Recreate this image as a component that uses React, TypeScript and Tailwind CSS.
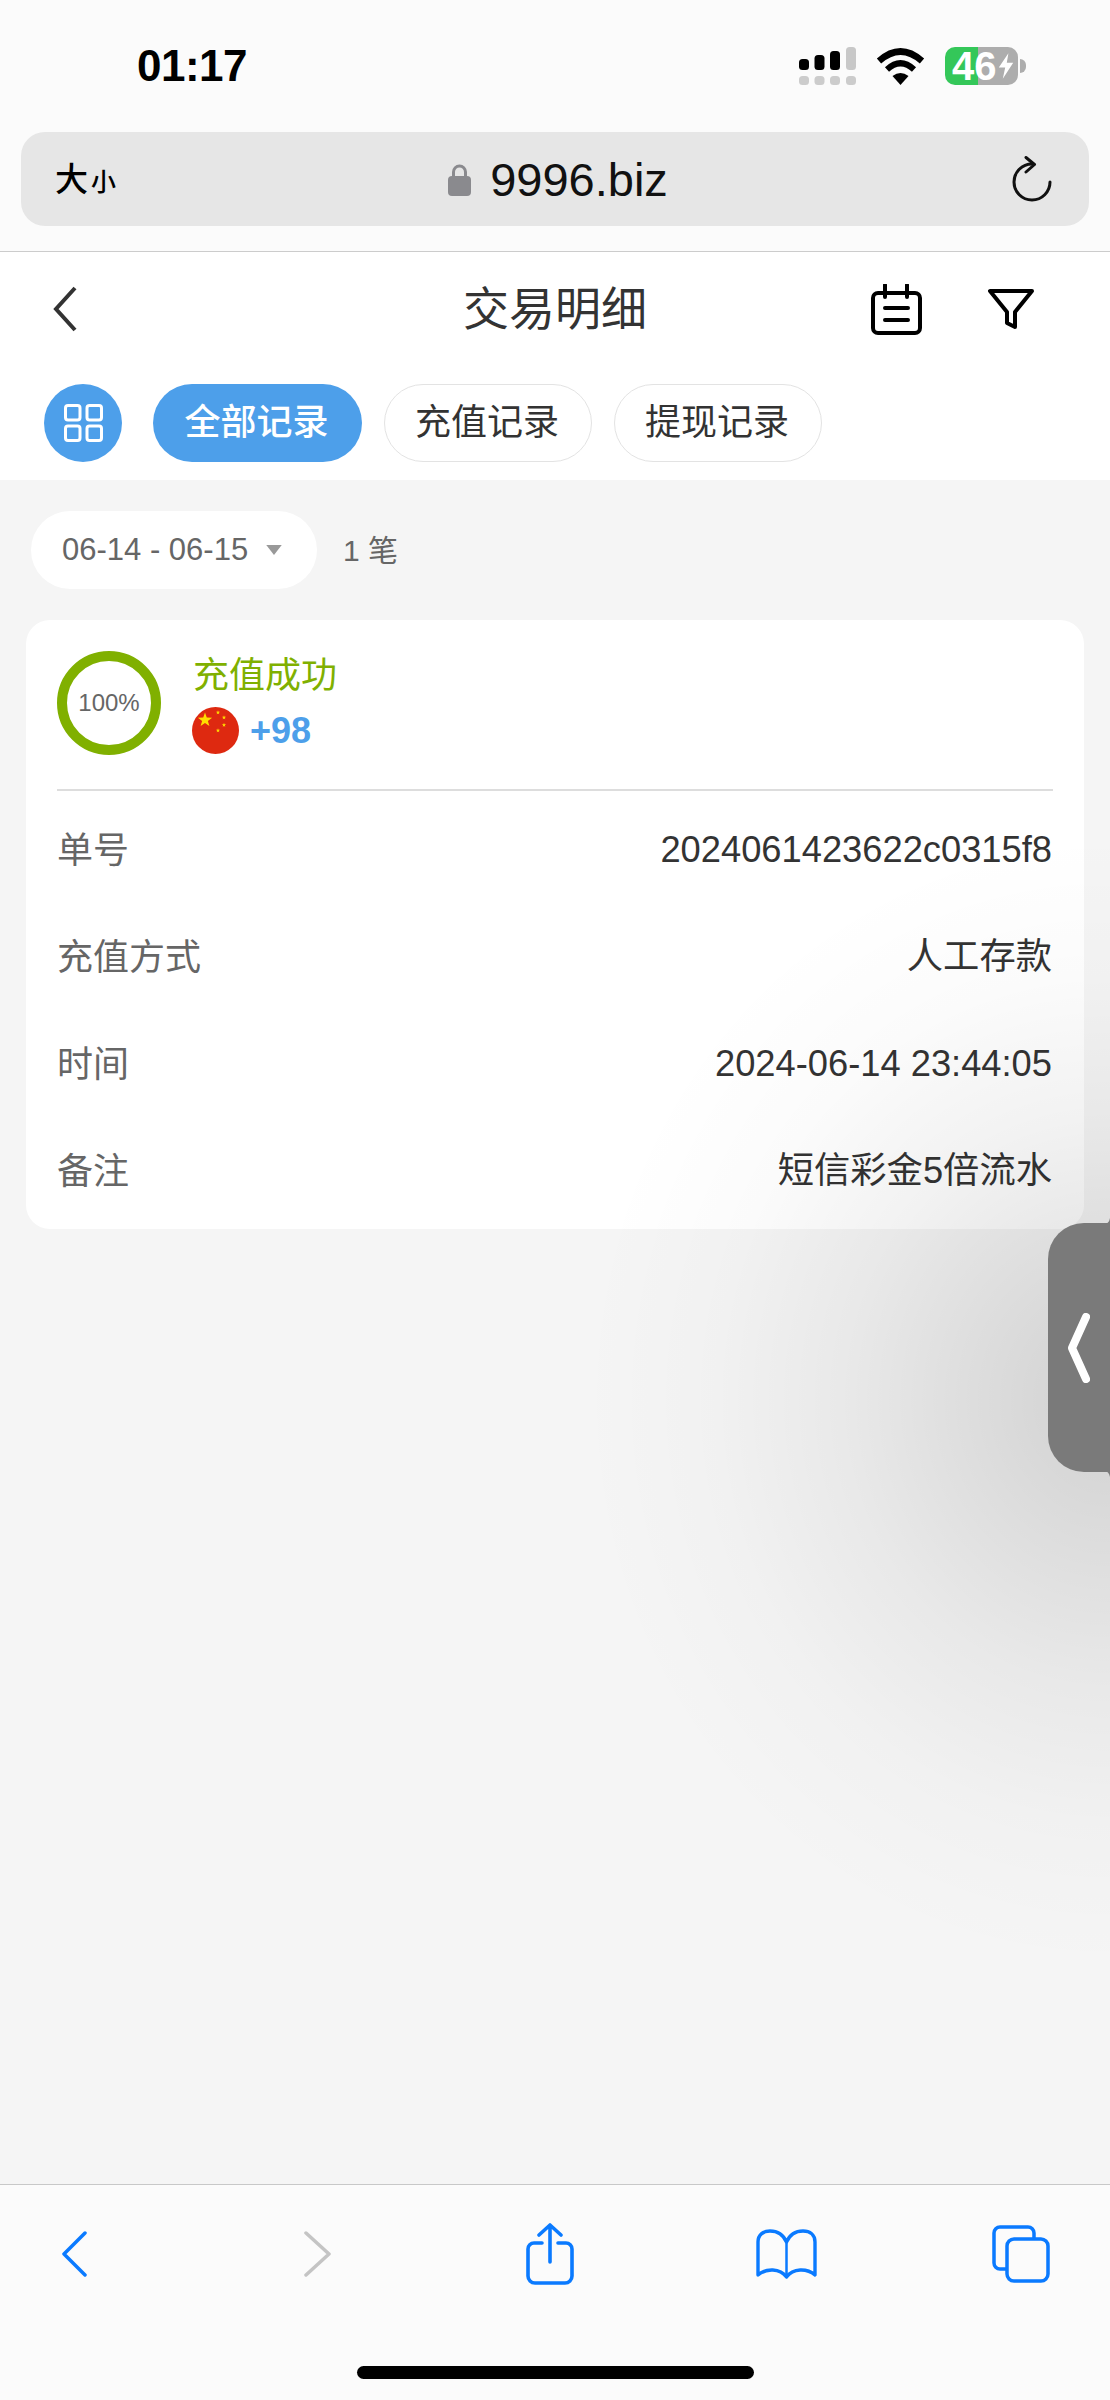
import { Fragment } from 'react';

const rows = [
  { label: '单号', value: '2024061423622c0315f8' },
  { label: '充值方式', value: '人工存款' },
  { label: '时间', value: '2024-06-14 23:44:05' },
  { label: '备注', value: '短信彩金5倍流水' },
];

function starPoints(cx: number, cy: number, r: number) {
  const pts: string[] = [];
  for (let i = 0; i < 10; i++) {
    const rad = i % 2 === 0 ? r : r * 0.4;
    const a = -Math.PI / 2 + (i * Math.PI) / 5;
    pts.push(`${cx + rad * Math.cos(a)},${cy + rad * Math.sin(a)}`);
  }
  return pts.join(' ');
}

function StatusIcons() {
  return (
    <div className="flex items-center">
      <svg width="57" height="38" viewBox="0 0 57 38">
        <rect x="0" y="12" width="10" height="11" rx="3.5" fill="#000" />
        <rect x="15.5" y="8" width="10" height="15" rx="3.5" fill="#000" />
        <rect x="31" y="4" width="10" height="19" rx="3.5" fill="#000" />
        <rect x="47" y="0" width="10" height="23" rx="3.5" fill="#c8c8c8" />
        {[0, 15.5, 31, 47].map((x) => (
          <rect key={x} x={x} y="29" width="10" height="9" rx="3.5" fill="#cccccc" />
        ))}
      </svg>
      <svg className="ml-[20px]" width="49" height="37" viewBox="0 0 49 37">
        <path d="M3 13 Q24.5 -6 46 13" fill="none" stroke="#000" strokeWidth="6.5" />
        <path d="M11 21.5 Q24.5 9 38 21.5" fill="none" stroke="#000" strokeWidth="6" />
        <path d="M16.5 28 Q24.5 22 32.5 28 L24.5 37 Z" fill="#000" />
      </svg>
      <div className="ml-[20px] w-[73px] h-[38px] rounded-[10px] flex items-center pl-[7px] bg-[linear-gradient(90deg,#34c759_45%,#adadad_45%)] text-white text-[40px] leading-[38px] font-bold">
        <span>46</span>
        <svg className="ml-[1px]" width="16" height="30" viewBox="0 0 20 32">
          <path d="M13 0 L1 18 H9 L6 32 L19 12 H11 Z" fill="#fff" />
        </svg>
      </div>
      <div className="ml-[2px] w-[6px] h-[14px] rounded-r-full bg-[#adadad]" />
    </div>
  );
}

function UrlBar() {
  return (
    <div className="mx-[21px] h-[94px] rounded-[24px] bg-[#e6e6e6] grid grid-cols-[1fr_auto_1fr] items-center pl-[34px] pr-[37px]">
      <div className="flex items-baseline font-medium text-black">
        <span className="text-[33px] leading-none">大</span>
        <span className="text-[25px] leading-none ml-[3px]">小</span>
      </div>
      <div className="ml-[9px] flex items-center text-[47px] leading-none text-[#111]">
        <svg width="23" height="33" viewBox="0 0 23 33">
          <path d="M5.5 14 V9 a6 6 0 0 1 12 0 V14" fill="none" stroke="#8a8a8e" strokeWidth="3" />
          <rect x="0" y="13" width="23" height="20" rx="4" fill="#8a8a8e" />
        </svg>
        <span className="ml-[19px]">9996.biz</span>
      </div>
      <div className="flex justify-end">
        <svg width="40" height="46" viewBox="0 0 40 46" fill="none" stroke="#111" strokeWidth="3" strokeLinecap="round" strokeLinejoin="round">
          <path d="M38 26 A18 18 0 1 1 20 8" />
          <path d="M14 1.5 L22.5 8.5 L14 16" />
        </svg>
      </div>
    </div>
  );
}

function PageNav() {
  return (
    <div className="bg-white">
      <div className="h-[114px] grid grid-cols-[1fr_auto_1fr] items-center px-[53px]">
        <svg width="24" height="46" viewBox="0 0 24 46" fill="none" stroke="#333" strokeWidth="4">
          <path d="M22 2 L3 23 L22 44" />
        </svg>
        <div className="text-[46px] leading-none text-[#333]">交易明细</div>
        <div className="flex items-center justify-end mr-[23px]">
          <svg width="51" height="51" viewBox="0 0 51 51" fill="none" stroke="#000" strokeWidth="4">
            <rect x="2" y="9" width="47" height="40" rx="5" />
            <path d="M14 1 V13 M36 1 V13" strokeLinecap="round" />
            <path d="M14 24 H37 M14 36 H37" strokeLinecap="round" />
          </svg>
          <svg className="ml-[66px]" width="46" height="42" viewBox="0 0 46 42" fill="none" stroke="#000" strokeWidth="4" strokeLinejoin="round">
            <path d="M2 3 H44 L27 24 V39 L19 35 V24 Z" />
          </svg>
        </div>
      </div>
      <div className="mt-[18px] pb-[18px] pl-[44px] flex items-center gap-[22px]">
        <div className="mr-[9px] w-[78px] h-[78px] rounded-full bg-[#4d9fea] flex items-center justify-center">
          <svg width="39" height="38" viewBox="0 0 39 38" fill="none" stroke="#fff" strokeWidth="3">
            <rect x="1.5" y="1.5" width="14.5" height="14.5" rx="2.5" />
            <rect x="23" y="1.5" width="14.5" height="14.5" rx="2.5" />
            <rect x="1.5" y="22" width="14.5" height="14.5" rx="2.5" />
            <rect x="23" y="22" width="14.5" height="14.5" rx="2.5" />
          </svg>
        </div>
        <div className="w-[209px] h-[78px] pr-[2px] rounded-full bg-[#4d9fea] text-white text-[36px] font-medium flex items-center justify-center">全部记录</div>
        <div className="w-[208px] h-[78px] pr-[2px] rounded-full border border-[#e3e3e3] text-[#333] text-[36px] flex items-center justify-center">充值记录</div>
        <div className="w-[208px] h-[78px] pr-[2px] rounded-full border border-[#e3e3e3] text-[#333] text-[36px] flex items-center justify-center">提现记录</div>
      </div>
    </div>
  );
}

function RecordCard() {
  return (
    <div className="mt-[31px] mx-[26px] rounded-[24px] bg-white pt-[31px] px-[31px] pb-[4px]">
      <div className="flex items-start">
        <div className="w-[104px] h-[104px] rounded-full border-[10px] border-[#80b000] flex items-center justify-center text-[24px] text-[#666]">100%</div>
        <div className="ml-[31px] pt-[4px]">
          <div className="ml-[1px] text-[36px] leading-[41px] text-[#80b000]">充值成功</div>
          <div className="mt-[11px] flex items-center">
            <svg width="47" height="47" viewBox="0 0 47 47">
              <circle cx="23.5" cy="23.5" r="23.5" fill="#de2910" />
              <polygon points={starPoints(13, 13, 7.5)} fill="#ffde00" />
              <polygon points={starPoints(26, 5.5, 2.2)} fill="#ffde00" />
              <polygon points={starPoints(32, 10.5, 2.2)} fill="#ffde00" />
              <polygon points={starPoints(32, 18, 2.2)} fill="#ffde00" />
              <polygon points={starPoints(26, 23.5, 2.2)} fill="#ffde00" />
            </svg>
            <span className="ml-[11px] text-[36px] leading-none font-bold text-[#4d9fea]">+98</span>
          </div>
        </div>
      </div>
      <div className="mt-[34px] h-[2px] bg-[#dddddd]" />
      <div className="pt-[6px] grid grid-cols-[auto_1fr]">
        {rows.map((row) => (
          <Fragment key={row.label}>
            <div className="h-[107px] flex items-center text-[36px] text-[#666]">{row.label}</div>
            <div className="h-[107px] pr-[1px] flex items-center justify-end text-[36.3px] text-[#333]">{row.value}</div>
          </Fragment>
        ))}
      </div>
    </div>
  );
}

function BrowserBar() {
  return (
    <div className="border-t border-[#c8c8c8] bg-[#fbfbfb] h-[216px]">
      <div className="h-[138px] pl-[62px] flex items-center">
        <svg width="25" height="46" viewBox="0 0 25 46" fill="none" stroke="#0a7aff" strokeWidth="3.5" strokeLinecap="round" strokeLinejoin="round">
          <path d="M23 2 L2 23 L23 44" />
        </svg>
        <svg className="ml-[217px]" width="27" height="46" viewBox="0 0 27 46" fill="none" stroke="#c4c4c4" strokeWidth="3.5" strokeLinecap="round" strokeLinejoin="round">
          <path d="M2 2 L25 23 L2 44" />
        </svg>
        <svg className="ml-[195px]" width="48" height="62" viewBox="0 0 48 62" fill="none" stroke="#0a7aff" strokeWidth="3.6" strokeLinecap="round" strokeLinejoin="round">
          <path d="M16 20 H8 a6 6 0 0 0 -6 6 V53 a7 7 0 0 0 7 7 H39 a7 7 0 0 0 7 -7 V26 a6 6 0 0 0 -6 -6 H32" />
          <path d="M24 2 V39 M13 12 L24 2 L35 12" />
        </svg>
        <svg className="ml-[182px]" width="61" height="52" viewBox="0 0 61 52" fill="none" stroke="#0a7aff" strokeWidth="3.4" strokeLinecap="round" strokeLinejoin="round">
          <path d="M30.5 14 C27 6 21 3 14 3 C7 3 2 7 2 14 V47 C10 40 24 40 30.5 49 C37 40 51 40 59 47 V14 C59 7 54 3 47 3 C40 3 34 6 30.5 14 Z" />
          <path d="M30.5 14 V49" strokeWidth="2.5" />
        </svg>
        <svg className="ml-[175px]" width="58" height="58" viewBox="0 0 58 58" fill="none" stroke="#0a7aff" strokeWidth="3.5" strokeLinejoin="round">
          <path d="M14 44 H8 a6 6 0 0 1 -6 -6 V8 a6 6 0 0 1 6 -6 H36 a6 6 0 0 1 6 6 V13" />
          <rect x="15" y="14" width="41" height="42" rx="7" />
        </svg>
      </div>
      <div className="mt-[43px] flex justify-center">
        <div className="w-[397px] h-[13px] rounded-full bg-black" />
      </div>
    </div>
  );
}

export default function App() {
  return (
    <div className="relative w-[1110px] h-[2400px] overflow-hidden flex flex-col bg-[#f5f5f5] [font-family:'Liberation_Sans','Noto_Sans_CJK_SC',sans-serif]">
      {/* Safari top */}
      <div className="bg-[#fbfbfb] border-b border-[#cccccc] h-[252px]">
        <div className="h-[132px] pl-[137px] pr-[84px] flex items-center justify-between">
          <div className="text-[44px] leading-none font-bold tracking-[-0.5px] text-black">01:17</div>
          <StatusIcons />
        </div>
        <UrlBar />
      </div>

      <PageNav />

      {/* Filter */}
      <div className="mt-[31px] ml-[31px] flex items-center">
        <div className="w-[286px] h-[78px] rounded-full bg-white flex items-center pl-[31px] text-[31px] text-[#666]">
          <span>06-14 - 06-15</span>
          <svg className="ml-[18px]" width="16" height="10" viewBox="0 0 17 11">
            <polygon points="0,0 17,0 8.5,11" fill="#999" />
          </svg>
        </div>
        <div className="ml-[26px] text-[30px] text-[#666]">1 笔</div>
      </div>

      <RecordCard />

      <div className="flex-1" />
      <BrowserBar />

      {/* side drawer handle + its shadow */}
      <div className="absolute inset-x-0 top-0 bottom-[216px] pointer-events-none bg-[radial-gradient(ellipse_530px_570px_at_100%_1400px,rgba(0,0,0,0.15),rgba(0,0,0,0.05)_50%,rgba(0,0,0,0.015)_75%,rgba(0,0,0,0)_100%)]" />
      <div className="absolute right-0 top-[1223px] w-[62px] h-[249px] rounded-l-[36px] bg-[#7a7a7a] flex items-center pl-[20px]">
        <svg className="absolute right-0 -top-[5px]" width="6" height="6" viewBox="0 0 6 6">
          <path d="M0 6 Q5 6 6 0 V6 Z" fill="#7a7a7a" />
        </svg>
        <svg width="22" height="70" viewBox="0 0 22 70" fill="none" stroke="#fff" strokeWidth="8" strokeLinecap="round" strokeLinejoin="round">
          <path d="M18 4 L4 35 L18 66" />
        </svg>
        <svg className="absolute right-0 -bottom-[5px]" width="6" height="6" viewBox="0 0 6 6">
          <path d="M0 0 Q5 0 6 6 V0 Z" fill="#7a7a7a" />
        </svg>
      </div>
    </div>
  );
}
